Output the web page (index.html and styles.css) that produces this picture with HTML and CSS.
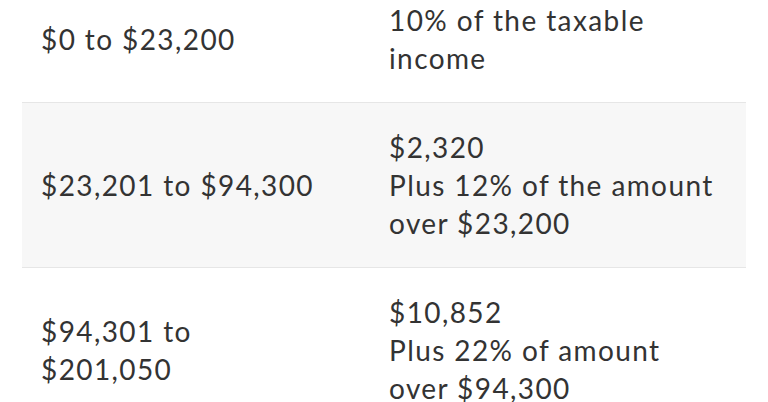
FILE: index.html
```html
<!DOCTYPE html>
<html>
<head>
<meta charset="utf-8">
<link rel="stylesheet" href="styles.css">
</head>
<body>
<table class="brackets">
  <tbody>
    <tr class="row">
      <td class="range">$0 to $23,200</td>
      <td class="tax">10% of the taxable<br>income</td>
    </tr>
    <tr class="row alt">
      <td class="range">$23,201 to $94,300</td>
      <td class="tax">$2,320<br>Plus 12% of the amount<br>over $23,200</td>
    </tr>
    <tr class="row">
      <td class="range">$94,301 to<br>$201,050</td>
      <td class="tax">$10,852<br>Plus 22% of amount<br>over $94,300</td>
    </tr>
  </tbody>
</table>
</body>
</html>
```

FILE: styles.css
```css
html, body {
  margin: 0;
  padding: 0;
  background: #ffffff;
}

body {
  font-family: "Lato", "Liberation Sans", sans-serif;
  color: #333333;
  overflow: hidden;
}

.brackets {
  width: 724px;
  margin: -24px 0 0 22px;
  border-collapse: collapse;
  font-size: 28px;
  line-height: 38px;
  letter-spacing: 1.4px;
}

.row {
  border-bottom: 1px solid #e6e6e6;
}

.row.alt {
  background: #f7f7f7;
}

.range,
.tax {
  padding: 25px 19px;
  vertical-align: middle;
}

.range {
  width: 310px;
}
```
